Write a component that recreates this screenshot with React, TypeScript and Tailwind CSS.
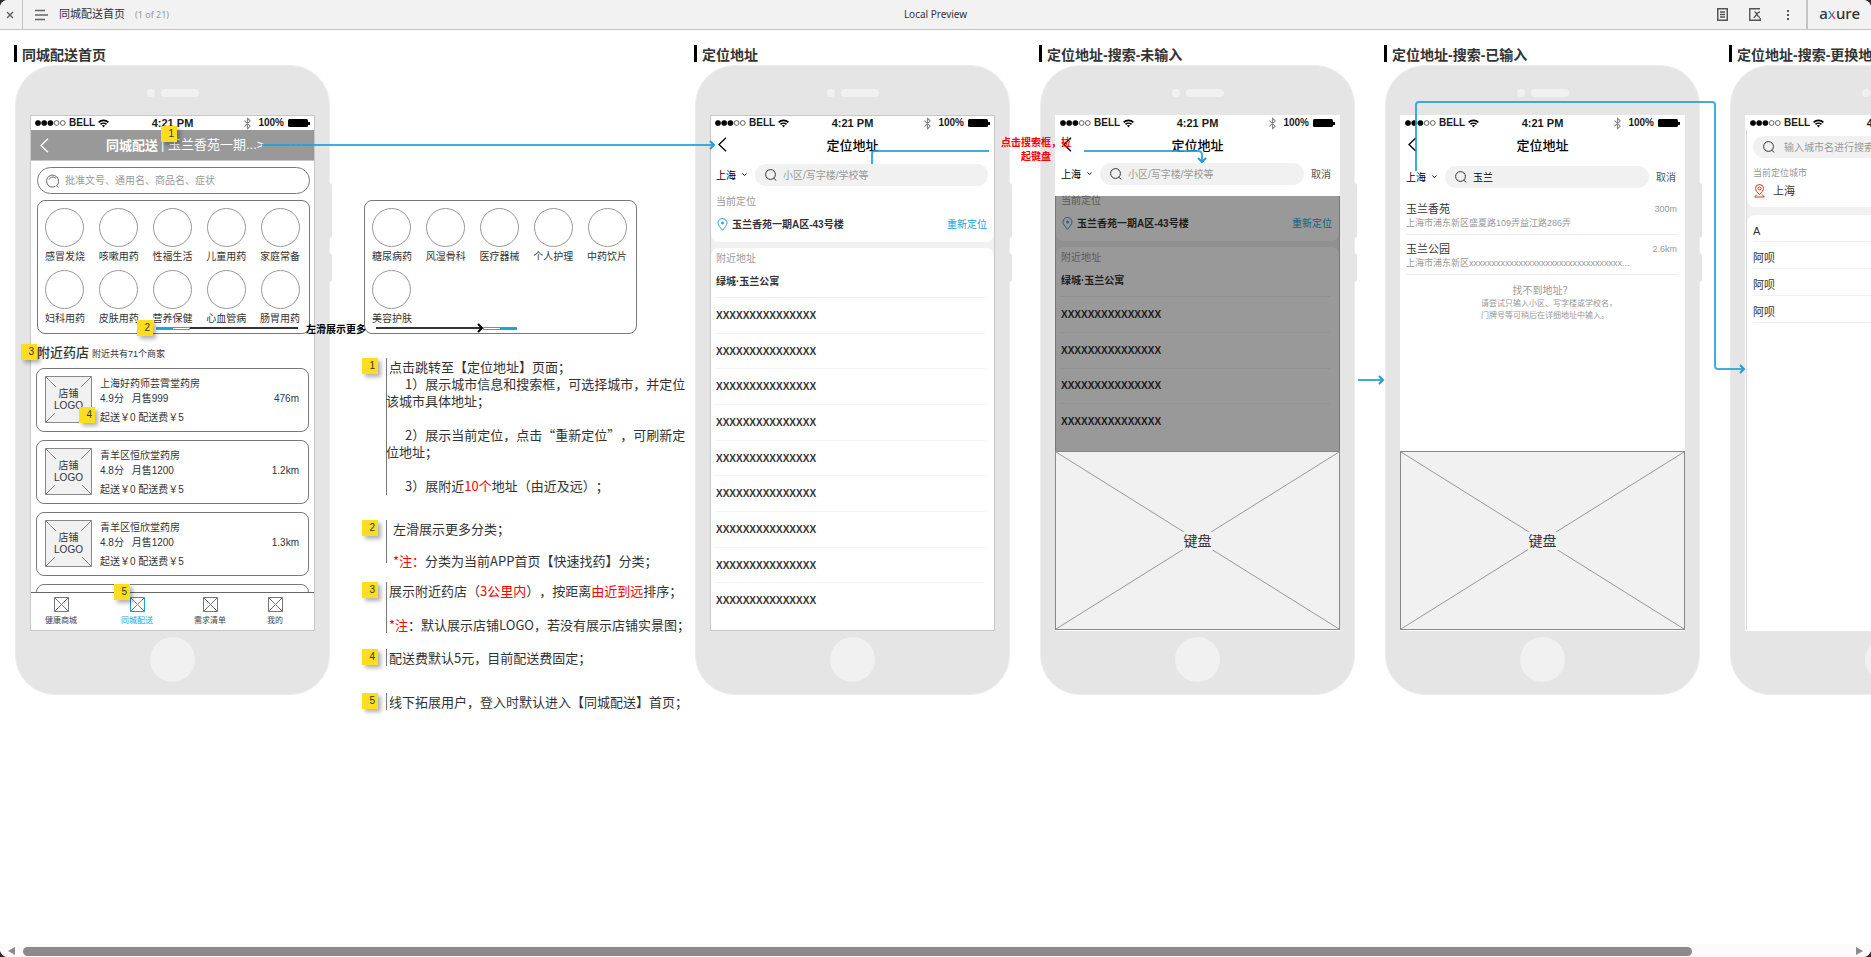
import type { ReactNode } from "react";
import { Bluetooth, X } from "lucide-react";

const categories = [
  "感冒发烧", "咳嗽用药", "性福生活", "儿童用药", "家庭常备",
  "妇科用药", "皮肤用药", "营养保健", "心血管病", "肠胃用药",
];

const moreCategories = ["糖尿病药", "风湿骨科", "医疗器械", "个人护理", "中药饮片", "美容护肤"];

const shops = [
  { name: "上海好药师芸霄堂药房", score: "4.9分", sales: "月售999", distance: "476m" },
  { name: "青羊区恒欣堂药房", score: "4.8分", sales: "月售1200", distance: "1.2km" },
  { name: "青羊区恒欣堂药房", score: "4.8分", sales: "月售1200", distance: "1.3km" },
];

const tabs = [
  { label: "健康商城", active: false, width: "w-[60px]" },
  { label: "同城配送", active: true, width: "w-[92px]" },
  { label: "需求清单", active: false, width: "w-[54px]" },
  { label: "我的", active: false, width: "w-[76px]" },
];

export default function App() {
  return (
    <div className="h-screen bg-[#2b2b2b] font-['Liberation_Sans','Noto_Sans_CJK_SC',sans-serif] text-[#333]">
      <div className="flex h-full flex-col overflow-hidden rounded-lg bg-white">
        <TopBar />
        <main className="relative min-h-0 flex-1 overflow-hidden">
          <div className="flex w-max pl-[15px] pt-[15px]">
            <Board title="同城配送首页">
              <HomeScreen />
            </Board>
            <Notes />
            <div className="flex gap-[30px]">
              <Board title="定位地址">
                <AddressScreen />
              </Board>
              <Board title="定位地址-搜索-未输入" plain>
                <AddressScreen searching />
              </Board>
              <Board title="定位地址-搜索-已输入" plain>
                <ResultScreen />
              </Board>
              <Board title="定位地址-搜索-更换地址" plain>
                <CityScreen />
              </Board>
            </div>
          </div>
          <Connectors />
        </main>
        <ScrollBar />
      </div>
    </div>
  );
}

function TopBar() {
  return (
    <header className="flex h-[30px] shrink-0 items-center border-b border-[#c4c4c4] bg-[#f2f2f2] font-['Noto_Sans','Noto_Sans_CJK_SC',sans-serif]">
      <div className="flex h-full flex-1 items-center">
        <button aria-label="关闭" className="flex h-full w-[23px] items-center justify-center border-r border-[#c4c4c4] pr-0.5">
          <X size={10} strokeWidth={3.5} className="text-[#666]" />
        </button>
        <button aria-label="页面" className="ml-3">
          <svg width="13" height="12" stroke="#666" strokeWidth="1.5">
            <path d="M0 1.5h10M0 6h13M0 10.5h10" />
          </svg>
        </button>
        <h1 className="ml-[11px] text-[11px]">同城配送首页</h1>
        <span className="ml-[10px] text-[9px] text-[#999]">(1 of 21)</span>
      </div>
      <div className="text-[10px]">Local Preview</div>
      <div className="flex h-full flex-1 items-center justify-end">
        <button aria-label="说明" className="mr-[21px]">
          <svg width="11" height="13" fill="none" stroke="#555" strokeWidth="1.5">
            <path d="M.75.75h9.5v11.5H.75zM3 4h5M3 6.5h5M3 9h5" />
          </svg>
        </button>
        <button aria-label="变量" className="mr-[24px]">
          <svg width="13" height="13" fill="none" stroke="#555" strokeWidth="1.4">
            <path d="M11 .75H.75v11.5h10.5V10M4.500 9.500c2 .5 3-6 6.500-5.500M5.500 4c2.500-.5 2.500 5.500 5.500 5.500" />
          </svg>
        </button>
        <button aria-label="更多" className="mr-4">
          <svg width="4" height="12" fill="#555">
            <path d="M1 1h2v2H1zM1 5h2v2H1zM1 9h2v2H1z" />
          </svg>
        </button>
        <div className="h-full border-l-2 border-[#c4c4c4]" />
        <div className="mx-[11px] pb-[2px] text-[15px] font-medium leading-none">
          a
          <span className="bg-[conic-gradient(#8cc63f_0_90deg,#e6268f_90deg_180deg,#0e9fd8_180deg)] bg-clip-text text-transparent">x</span>
          ure
        </div>
      </div>
    </header>
  );
}

function ScrollBar() {
  return (
    <div className="flex h-[13px] shrink-0 items-center gap-2 bg-[#fbfbfb] px-2 pt-px">
      <svg width="7" height="8" fill="#8b8b8b"><path d="M7 0v8L0 4z" /></svg>
      <div className="mr-[156px] h-[9px] flex-1 rounded-full bg-[#8b8b8b]" />
      <svg width="7" height="8" fill="#8b8b8b"><path d="M0 0v8l7-4z" /></svg>
    </div>
  );
}

function Board({ title, plain, children }: { title: string; plain?: boolean; children: ReactNode }) {
  return (
    <section className="w-[315px] shrink-0">
      <h2 className="-ml-px flex h-[17px] items-center gap-[5px] whitespace-nowrap border-l-[3px] border-black pl-[5px] pt-[3px] text-[14px] font-bold">
        {title}
      </h2>
      <div className="relative mt-[3px] flex h-[630px] flex-col items-center rounded-[40px] border border-[#ededed] bg-[#e5e5e5] pt-[23px]">
        <div className="absolute -right-[3px] top-[117px] h-[55px] w-[3px] rounded-r-sm bg-[#e5e5e5]" />
        <div className="absolute -right-[3px] top-[187px] h-[29px] w-[3px] rounded-r-sm bg-[#e5e5e5]" />
        <div className="flex gap-[6px]">
          <div className="size-2 rounded-full bg-[#f1f1f1]" />
          <div className="h-2 w-[38px] rounded-full bg-[#f1f1f1]" />
        </div>
        <div className={`mt-[18px] flex h-[516px] w-[285px] flex-col border bg-white ${plain ? "border-white" : "border-[#c8c8c8]"}`}>
          <StatusBar />
          {children}
        </div>
        <div className="mt-[6px] size-[45px] rounded-full bg-[#f1f1f1]" />
      </div>
    </section>
  );
}

function StatusBar() {
  return (
    <div className="flex h-[14px] shrink-0 items-center px-1 text-[10px] font-bold leading-none text-[#1a1a1a]">
      <div className="flex flex-1 items-center gap-[3px]">
        <svg width="31" height="6" fill="#000" stroke="#000" strokeWidth="0.6">
          <circle cx="3" cy="3" r="2.600" />
          <circle cx="9.200" cy="3" r="2.600" />
          <circle cx="15.400" cy="3" r="2.600" />
          <circle cx="21.600" cy="3" r="2.400" fill="none" />
          <circle cx="27.800" cy="3" r="2.400" fill="none" />
        </svg>
        BELL
        <svg width="11" height="9" viewBox="0 0 11 9" fill="none" stroke="#000" strokeWidth="1.600">
          <path d="M.6 3.400C3.300.7 7.700.7 10.400 3.400M2.500 5.400c1.700-1.600 4.300-1.600 6 0" />
          <path d="M3.900 6.600c1-.8 2.200-.8 3.200 0L5.500 8.400z" fill="#000" stroke="none" />
        </svg>
      </div>
      <div className="text-[11px]">4:21 PM</div>
      <div className="flex flex-1 items-center justify-end gap-1">
        <Bluetooth size={13} className="text-[#888]" />
        100%
        <svg width="22" height="8">
          <rect width="20" height="8" rx="1.500" />
          <rect x="20" y="3" width="2" height="3" />
        </svg>
      </div>
    </div>
  );
}

function BackArrow({ className }: { className: string }) {
  return (
    <button aria-label="返回" className={className}>
      <svg width="9" height="15" fill="none" stroke="currentColor" strokeWidth="1.300">
        <path d="M8 .7 1 7.500l7 6.800" />
      </svg>
    </button>
  );
}

function SearchIcon() {
  return (
    <svg width="12" height="12" viewBox="0 0 12 12" fill="none" stroke="#333" strokeWidth="1" className="shrink-0">
      <circle cx="5.500" cy="5.500" r="4.900" />
      <path d="m8.800 9.200 2.500 2.300" />
    </svg>
  );
}

function Badge({ n, className = "" }: { n: number; className?: string }) {
  return (
    <span className={`flex size-4 shrink-0 items-center justify-end bg-[#ffde21] pr-[3px] font-['Liberation_Sans',sans-serif] text-[10px] leading-none shadow-[3px_3px_4px_rgba(0,0,0,0.3)] ${className}`}>
      {n}
    </span>
  );
}

function CategoryCard({ items }: { items: string[] }) {
  return (
    <div className="grid h-[134px] w-[273px] shrink-0 grid-cols-5 content-start justify-items-center rounded-lg border border-[#797979] pr-[2px] pt-[7px]">
      {items.map((item) => (
        <div key={item} className="flex h-[62px] flex-col items-center">
          <div className="size-[39px] rounded-full border border-[#999]" />
          <span className="mt-[3px] whitespace-nowrap text-[10px] leading-[14px]">{item}</span>
        </div>
      ))}
    </div>
  );
}

function HomeScreen() {
  return (
    <div className="flex min-h-0 flex-1 flex-col">
      <div className="flex h-[31px] shrink-0 items-center border-b border-[#c8c8c8] bg-[#999] text-[13px] text-white">
        <BackArrow className="ml-[9px] w-[66px]" />
        <span className="pt-[2px] font-bold">同城配送</span>
        <a href="#address" className="ml-[3px] whitespace-nowrap">| 玉兰香苑一期...&gt;</a>
        <svg width="12" height="2" className="ml-auto mr-[12px]" fill="#fff" opacity="0.4">
          <path d="M0 0h2v2H0zM5 0h2v2H5zM10 0h2v2h-2z" />
        </svg>
      </div>

      <div className="flex min-h-0 flex-1 flex-col overflow-hidden pl-[5px] pt-[6px]">
        <label className="ml-px flex h-[27px] w-[273px] shrink-0 items-center gap-[5px] rounded-full border border-[#797979] pl-2">
          <svg width="14" height="14" fill="none" stroke="#666" className="shrink-0">
            <path d="M9.500 12.300A6 6 0 1 1 12.500 7.500c0 2-.7 3.300-2 4.500l2 1.300" />
            <path d="M3 5.500C4 3 8 2 10 4.500" />
          </svg>
          <input aria-label="搜索药品" placeholder="批准文号、通用名、商品名、症状" className="w-full text-[10px] outline-none placeholder:text-[#999]" />
        </label>
        <div className="ml-px mt-[6px]">
          <CategoryCard items={categories} />
        </div>
        <h3 className="mt-[9px] flex h-5 shrink-0 items-center gap-[3px] pl-px text-[13px] font-medium leading-5">
          附近药店 <small className="pt-[2px] text-[9px] font-normal">附近共有71个商家</small>
        </h3>
        <ul className="mt-[5px] flex flex-col gap-2">
          {shops.map((shop) => (
            <li key={shop.distance} className="flex h-16 w-[273px] shrink-0 rounded-lg border border-[#797979] pl-2 pr-[9px] pt-[7px] text-[10px]">
              <ShopLogo />
              <div className="ml-2 flex-1 leading-[15px]">
                <h4>{shop.name}</h4>
                <p>
                  {shop.score} <span className="ml-[5px]">{shop.sales}</span>
                </p>
                <p className="mt-1">起送￥0 配送费￥5</p>
              </div>
              <span className="pt-[15px] leading-[15px]">{shop.distance}</span>
            </li>
          ))}
          <li className="h-16 w-[273px] shrink-0 rounded-lg border border-[#797979]" />
        </ul>
      </div>

      <nav className="flex h-[38px] shrink-0 border-t border-[#666] text-[8px]">
        {tabs.map((tab) => (
          <a
            key={tab.label}
            href={`#${tab.label}`}
            className={`flex flex-col items-center pt-1 ${tab.width} ${tab.active ? "text-[#1e9fd8]" : "text-[#444]"}`}
          >
            <svg width="15" height="15" fill="none" stroke={tab.active ? "#1e9fd8" : "#777"}>
              <path d="M.5.500h14v14H.5zM.5.500l14 14M14.500.500l-14 14" />
            </svg>
            <span className="mt-[3px] leading-[12px]">{tab.label}</span>
          </a>
        ))}
      </nav>
    </div>
  );
}

function ShopLogo() {
  return (
    <div className="relative flex size-[47px] shrink-0 items-center justify-center bg-[#f1f1f1]">
      <svg className="absolute inset-0" width="47" height="47" fill="none" stroke="#888">
        <path d="M.5.500h46v46H.5zM.5.500l46 46M46.500.500l-46 46" />
      </svg>
      <span className="relative bg-[#f1f1f1] py-px text-center text-[10px] leading-[12px]">
        店铺
        <br />
        LOGO
      </span>
    </div>
  );
}

function SearchRow({ value, cancel }: { value?: string; cancel?: boolean }) {
  return (
    <div className="flex h-[22px] shrink-0 items-center pl-[5px] pr-[6px] text-[10px]">
      <label className="relative flex w-[39px] shrink-0 items-center">
        <select aria-label="城市" className="w-8 appearance-none text-black outline-none">
          <option>上海</option>
        </select>
        <svg width="5" height="4" fill="none" stroke="#000" className="absolute left-[26px]">
          <path d="M.5.500l2 2 2-2" />
        </svg>
      </label>
      <label className="flex h-full flex-1 items-center gap-[6px] rounded-full bg-[#f1f1f1] pl-[10px]">
        <SearchIcon />
        <input aria-label="搜索地址" defaultValue={value} placeholder="小区/写字楼/学校等" className="w-full text-black outline-none placeholder:text-[#999]" />
      </label>
      {cancel && <button className="ml-[7px] mr-[2px] pt-px text-[#555]">取消</button>}
    </div>
  );
}

function ScreenTitle() {
  return (
    <div className="relative flex h-[33px] shrink-0 items-center justify-center">
      <BackArrow className="absolute left-[7px] top-[7px] text-black" />
      <h3 className="pb-px text-[13px] font-medium text-black">定位地址</h3>
    </div>
  );
}

function AddressScreen({ searching }: { searching?: boolean }) {
  const rows = searching ? 4 : 9;
  return (
    <>
      <ScreenTitle />
      <div className={searching ? "" : "pt-px"}>
        <SearchRow cancel={searching} />
      </div>
      <div className="relative mt-[11px] flex min-h-0 flex-1 flex-col bg-[#f1f1f1] text-[10px]">
        <div className="h-[45px] shrink-0 rounded-b-lg bg-white pl-[5px] pr-[7px]">
          <h4 className="leading-[10px] text-[#999]">当前定位</h4>
          <div className="flex h-[35px] items-center pb-px">
            <PinIcon />
            <strong className="ml-1 flex-1">玉兰香苑一期A区-43号楼</strong>
            <button className="text-[#1e9fd8]">重新定位</button>
          </div>
        </div>
        <div className="mt-[6px] flex min-h-0 flex-1 flex-col rounded-t-lg bg-white pb-[11px] pl-1 pr-[9px] pt-[5px]">
          <h4 className="shrink-0 pl-px leading-[12px] text-[#999]">附近地址</h4>
          <ul className="flex min-h-0 flex-1 flex-col font-bold">
            <li className="flex h-[33px] shrink-0 items-center border-b border-[#efefef] pl-px">绿城·玉兰公寓</li>
            {Array.from({ length: rows }, (_, i) => (
              <li key={i} className="flex h-9 items-center border-b border-[#f3f3f3] pl-px last:border-transparent">
                XXXXXXXXXXXXXXX
              </li>
            ))}
          </ul>
        </div>
        {searching && <div className="absolute -inset-x-px inset-y-0 border-x border-[#777] bg-black/40" />}
      </div>
      {searching && <Keyboard />}
    </>
  );
}

function PinIcon() {
  return (
    <svg width="11" height="13" viewBox="0 0 11 13" fill="none" stroke="#3a9bdc" className="ml-px">
      <path d="M5.500 12.300C3 9.300 1 7.200 1 5a4.500 4.500 0 0 1 9 0c0 2.200-2 4.300-4.500 7.300z" />
      <circle cx="5.500" cy="5" r="1" fill="#3a9bdc" />
    </svg>
  );
}

function Keyboard() {
  return (
    <div className="relative -mx-px flex h-[179px] shrink-0 items-center justify-center border border-[#888] bg-[#f1f1f1]">
      <svg className="absolute inset-0 size-full" viewBox="0 0 100 100" preserveAspectRatio="none" stroke="#999">
        <path d="M0 0l100 100M100 0L0 100" vectorEffect="non-scaling-stroke" />
      </svg>
      <span className="relative bg-[#f1f1f1] px-px text-[14px] leading-[18px]">键盘</span>
    </div>
  );
}

function ResultScreen() {
  return (
    <>
      <ScreenTitle />
      <div className="pt-[3px]">
        <SearchRow value="玉兰" cancel />
      </div>
      <ul className="mt-[7px] pl-[5px] pr-[7px] text-[9px] text-[#999]">
        <Result name="玉兰香苑" distance="300m" address="上海市浦东新区盛夏路109弄益江路286弄" />
        <Result name="玉兰公园" distance="2.6km" address="上海市浦东新区xxxxxxxxxxxxxxxxxxxxxxxxxxxxxxxxxx..." />
      </ul>
      <div className="flex-1 pt-[9px] text-[#999]">
        <p className="text-center text-[10px] leading-[14px]">找不到地址？</p>
        <p className="pl-20 text-[8px] leading-[12px]">
          请尝试只输入小区、写字楼或学校名，
          <br />
          门牌号等可稍后在详细地址中输入。
        </p>
      </div>
      <Keyboard />
    </>
  );
}

function Result({ name, distance, address }: { name: string; distance: string; address: string }) {
  return (
    <li className="h-10 border-b border-[#efefef] pt-[7px] leading-[14px]">
      <div className="flex justify-between">
        <strong className="text-[11px] font-normal text-[#333]">{name}</strong>
        <span>{distance}</span>
      </div>
      <p className="whitespace-nowrap">{address}</p>
    </li>
  );
}

function CityScreen() {
  return (
    <div className="flex flex-1 flex-col border-l border-[#d5d5d5]">
      <div className="bg-[#f1f1f1]">
        <div className="h-[77px] rounded-b-lg bg-white px-[6px] pt-[6px]">
          <label className="flex h-[22px] items-center gap-[9px] rounded-full bg-[#f1f1f1] pl-[10px]">
            <SearchIcon />
            <input aria-label="搜索城市" placeholder="输入城市名进行搜索" className="w-full text-[10px] outline-none placeholder:text-[#999]" />
          </label>
          <h4 className="mt-[9px] text-[9px] leading-[12px] text-[#999]">当前定位城市</h4>
          <div className="flex h-6 items-center gap-2 pl-px text-[11px]">
            <svg width="11" height="14" fill="none" stroke="#d9301a">
              <path d="M5.500 10.500C3 8 1.500 6.500 1.500 4.500a4 4 0 0 1 8 0c0 2-1.500 3.500-4 6zM3 10.500l-2.300 2.500h9.600L8 10.500" />
              <circle cx="5.500" cy="4.500" r="1.500" />
            </svg>
            上海
          </div>
        </div>
        <ul className="mt-2 rounded-t-lg bg-white pl-[6px] text-[11px]">
          {["A", "阿呗", "阿呗", "阿呗"].map((city, i) => (
            <li key={i} className="flex h-[27px] items-center border-b border-[#f1f1f1] pt-[6px]">
              {city}
            </li>
          ))}
        </ul>
      </div>
    </div>
  );
}

function Note({ n, className, children }: { n: number; className: string; children: ReactNode }) {
  return (
    <li className="flex gap-2">
      <Badge n={n} />
      <div className={`whitespace-nowrap border-l border-[#797979] ${className}`}>{children}</div>
    </li>
  );
}

function Notes() {
  return (
    <div className="w-[365px] shrink-0 pt-[155px]">
      <div className="pl-[34px]">
        <CategoryCard items={moreCategories} />
      </div>
      <ol className="mt-6 pl-[32px] font-['Noto_Sans_CJK_SC',sans-serif] text-[13px] leading-[17px] [text-spacing-trim:space-all]">
        <Note n={1} className="h-[137px]">
          <p className="pl-[2px]">点击跳转至【定位地址】页面；</p>
          <p className="pl-[18px]">1）展示城市信息和搜索框，可选择城市，并定位</p>
          <p className="-ml-px">该城市具体地址；</p>
          <p className="pl-[18px] pt-[17px]">2）展示当前定位，点击“重新定位”，可刷新定</p>
          <p className="-ml-px">位地址；</p>
          <p className="pl-[18px] pt-[17px]">
            3）展附近<em className="not-italic text-[#f00]">10个</em>地址（由近及远）；
          </p>
        </Note>
        <li className="h-[25px]" aria-hidden="true" />
        <Note n={2} className="h-[43px] pl-[6px]">
          <p>左滑展示更多分类；</p>
          <p className="pt-[15px]">
            <em className="not-italic text-[#f00]">*注：</em>分类为当前APP首页【快速找药】分类；
          </p>
        </Note>
        <li className="h-[19px]" aria-hidden="true" />
        <Note n={3} className="pl-[2px]">
          <p>
            展示附近药店（<em className="not-italic text-[#f00]">3公里内</em>），按距离
            <em className="not-italic text-[#f00]">由近到远</em>排序；
          </p>
          <p className="pt-[17px]">
            <em className="not-italic text-[#f00]">*注</em>：默认展示店铺LOGO，若没有展示店铺实景图；
          </p>
        </Note>
        <li className="h-4" aria-hidden="true" />
        <Note n={4} className="pl-[2px]">配送费默认5元，目前配送费固定；</Note>
        <li className="h-[27px]" aria-hidden="true" />
        <Note n={5} className="pl-[2px]">线下拓展用户，登入时默认进入【同城配送】首页；</Note>
      </ol>
    </div>
  );
}

// Flow lines, markers and captions that float over the boards
function Connectors() {
  return (
    <div className="pointer-events-none absolute left-0 top-0">
      <svg width="1900" height="700" fill="none" stroke="#1e9fd8" strokeWidth="2" className="max-w-none">
        <g opacity="0.85">
          <path d="M262 115H713" />
          <path d="M872 134V124Q872 121 875 121H989" />
          <path d="M1084 121H1198Q1202 121 1202 125V132" />
          <path d="M1358 350H1382" />
          <path d="M1416 141V75Q1416 72 1419 72H1712Q1715 72 1715 75V336Q1715 339 1718 339H1743" />
        </g>
        <path d="M710 111l4 4-4 4M1198 128l4 4 4-4M1379 346l4 4-4 4M1740 335l4 4-4 4" />
        <path d="M190 298H298M376 298H482" stroke="#333" />
        <path d="M478 294l4 4-4 4" stroke="#000" />
        <path d="M156.500 297.500h33v2h-33zM483.500 297.500h33v2h-33z" stroke="#888" strokeWidth="1" fill="#fff" />
        <path d="M156 298.500h17M500 298.500h17" />
      </svg>
      <p className="absolute left-[306px] top-[293px] whitespace-nowrap text-[10px] font-bold leading-[14px] text-black">左滑展示更多</p>
      <p className="absolute left-[999px] top-[106px] w-[74px] text-center text-[10px] font-bold leading-[14px] text-[#f00]">
        点击搜索框，拉
        <br />
        起键盘
      </p>
      <Badge n={1} className="absolute left-[161px] top-[96px]" />
      <Badge n={2} className="absolute left-[137px] top-[290px]" />
      <Badge n={3} className="absolute left-[21px] top-[314px]" />
      <Badge n={4} className="absolute left-[79px] top-[377px]" />
      <Badge n={5} className="absolute left-[114px] top-[554px]" />
    </div>
  );
}
